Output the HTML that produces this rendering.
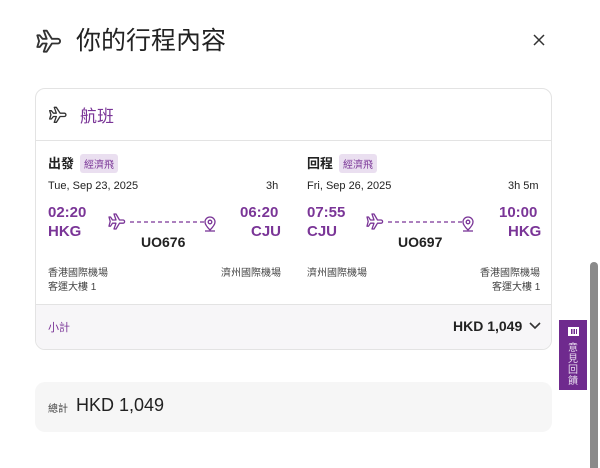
<!DOCTYPE html>
<html><head><meta charset="utf-8"><style>
*{margin:0;padding:0;box-sizing:border-box}
body{width:600px;height:468px;overflow:hidden;background:#fff;font-family:"Liberation Sans","Noto Sans CJK TC",sans-serif;color:#222;position:relative}
.a{position:absolute;white-space:nowrap}
.p{color:#7a3597;font-weight:bold}
.tag{background:#eadff0;color:#7a3597;font-size:10px;padding:2px 4px;border-radius:3px}
.s{font-size:10px;color:#444}
</style></head><body>
<svg class="a" style="left:34px;top:26px" width="30" height="28" viewBox="0 0 24 24" fill="none" stroke="#333" stroke-width="1.6" stroke-linejoin="round"><path d="M2 8l2 0 2.5 3H10L7.5 4h2.5l4.5 7h5a2 2 0 0 1 0 4h-5l-4.5 7H7.5L10 15H6.5L4 18H2l1.5-5z"/></svg>
<div class="a" style="left:76px;top:21px;font-size:25px;color:#222">你的行程內容</div>
<svg class="a" style="left:533px;top:34px" width="12" height="12" viewBox="0 0 12 12" stroke="#333" stroke-width="1.5"><path d="M1 1l10 10M11 1L1 11"/></svg>
<div class="a" style="left:35px;top:88px;width:517px;height:262px;border:1px solid #e3e3e3;border-radius:10px;overflow:hidden">
 <div class="a" style="left:0;top:51px;width:517px;border-top:1px solid #e3e3e3"></div>
 <div class="a" style="left:0;top:215px;width:517px;height:47px;background:#f7f6f8;border-top:1px solid #e3e3e3"></div>
</div>
<svg class="a" style="left:47px;top:104px" width="22" height="20" viewBox="0 0 24 24" fill="none" stroke="#333" stroke-width="1.6" stroke-linejoin="round"><path d="M2 8l2 0 2.5 3H10L7.5 4h2.5l4.5 7h5a2 2 0 0 1 0 4h-5l-4.5 7H7.5L10 15H6.5L4 18H2l1.5-5z"/></svg>
<div class="a" style="left:80px;top:102px;font-size:17px;color:#7a3597">航班</div>

<div class="a" style="left:48px;top:153px;font-size:13px;font-weight:bold">出發</div>
<div class="a tag" style="left:80px;top:154px">經濟飛</div>
<div class="a" style="left:48px;top:180px;font-size:11px">Tue, Sep 23, 2025</div>
<div class="a" style="left:266px;top:180px;font-size:11px">3h</div>
<div class="a p" style="left:48px;top:204px;font-size:15px">02:20</div>
<div class="a p" style="left:48px;top:223px;font-size:15px">HKG</div>
<div class="a p" style="left:240px;top:204px;font-size:15px">06:20</div>
<div class="a p" style="left:251px;top:223px;font-size:15px">CJU</div>
<div class="a" style="left:141px;top:234px;font-size:14px;font-weight:bold">UO676</div>
<div class="a s" style="left:48px;top:264px">香港國際機場</div>
<div class="a s" style="left:48px;top:278px">客運大樓 1</div>
<div class="a s" style="left:221px;top:264px">濟州國際機場</div>

<div class="a" style="left:307px;top:153px;font-size:13px;font-weight:bold">回程</div>
<div class="a tag" style="left:339px;top:154px">經濟飛</div>
<div class="a" style="left:307px;top:180px;font-size:11px">Fri, Sep 26, 2025</div>
<div class="a" style="left:508px;top:180px;font-size:11px">3h 5m</div>
<div class="a p" style="left:307px;top:204px;font-size:15px">07:55</div>
<div class="a p" style="left:307px;top:223px;font-size:15px">CJU</div>
<div class="a p" style="left:499px;top:204px;font-size:15px">10:00</div>
<div class="a p" style="left:508px;top:223px;font-size:15px">HKG</div>
<div class="a" style="left:398px;top:234px;font-size:14px;font-weight:bold">UO697</div>
<div class="a s" style="left:307px;top:264px">濟州國際機場</div>
<div class="a s" style="left:480px;top:264px">香港國際機場</div>
<div class="a s" style="left:492px;top:278px">客運大樓 1</div>

<svg class="a" style="left:108px;top:211px" width="112" height="22" viewBox="0 0 112 22" fill="none" stroke="#7a3597" stroke-width="1.3" stroke-linejoin="round"><path d="M1 6h1.5l2 3H8L6 3h2l3.5 6h3.5a1.6 1.6 0 0 1 0 3.2H11.5L8 18H6l2-5.8H4.5l-2 3H1l1.2-4.7z"/><path d="M22 11h74" stroke-dasharray="4 3"/><path d="M102 19c-4-4-5-6-5-8a5 5 0 0 1 10 0c0 2-1 4-5 8z"/><circle cx="102" cy="11" r="1.8"/><path d="M97 20h10"/></svg>
<svg class="a" style="left:366px;top:211px" width="112" height="22" viewBox="0 0 112 22" fill="none" stroke="#7a3597" stroke-width="1.3" stroke-linejoin="round"><path d="M1 6h1.5l2 3H8L6 3h2l3.5 6h3.5a1.6 1.6 0 0 1 0 3.2H11.5L8 18H6l2-5.8H4.5l-2 3H1l1.2-4.7z"/><path d="M22 11h74" stroke-dasharray="4 3"/><path d="M102 19c-4-4-5-6-5-8a5 5 0 0 1 10 0c0 2-1 4-5 8z"/><circle cx="102" cy="11" r="1.8"/><path d="M97 20h10"/></svg>

<div class="a" style="left:48px;top:319px;font-size:11px;color:#7a3597">小計</div>
<div class="a" style="left:453px;top:318px;font-size:14px;font-weight:bold;color:#222">HKD 1,049</div>
<svg class="a" style="left:528px;top:320px" width="14" height="12" viewBox="0 0 14 12" fill="none" stroke="#333" stroke-width="1.6"><path d="M2 3l5 5 5-5"/></svg>

<div class="a" style="left:35px;top:382px;width:517px;height:50px;background:#f6f6f6;border-radius:10px"></div>
<div class="a" style="left:48px;top:400px;font-size:10px;color:#444">總計</div>
<div class="a" style="left:76px;top:395px;font-size:18px;color:#222">HKD 1,049</div>

<div class="a" style="left:559px;top:320px;width:28px;height:70px;background:#6f2a8e"></div>
<div class="a" style="left:568px;top:327px;width:11px;height:9px;border:2px solid #fff;background:repeating-linear-gradient(90deg,#fff 0 1px,#6f2a8e 1px 2.5px)"></div>
<div class="a" style="left:568px;top:343px;width:11px;font-size:10px;line-height:11px;color:#e8dcef;white-space:normal">意見回饋</div>
<div class="a" style="left:590px;top:262px;width:8px;height:206px;background:#8a8a8a;border-radius:4px 4px 0 0"></div>
</body></html>
